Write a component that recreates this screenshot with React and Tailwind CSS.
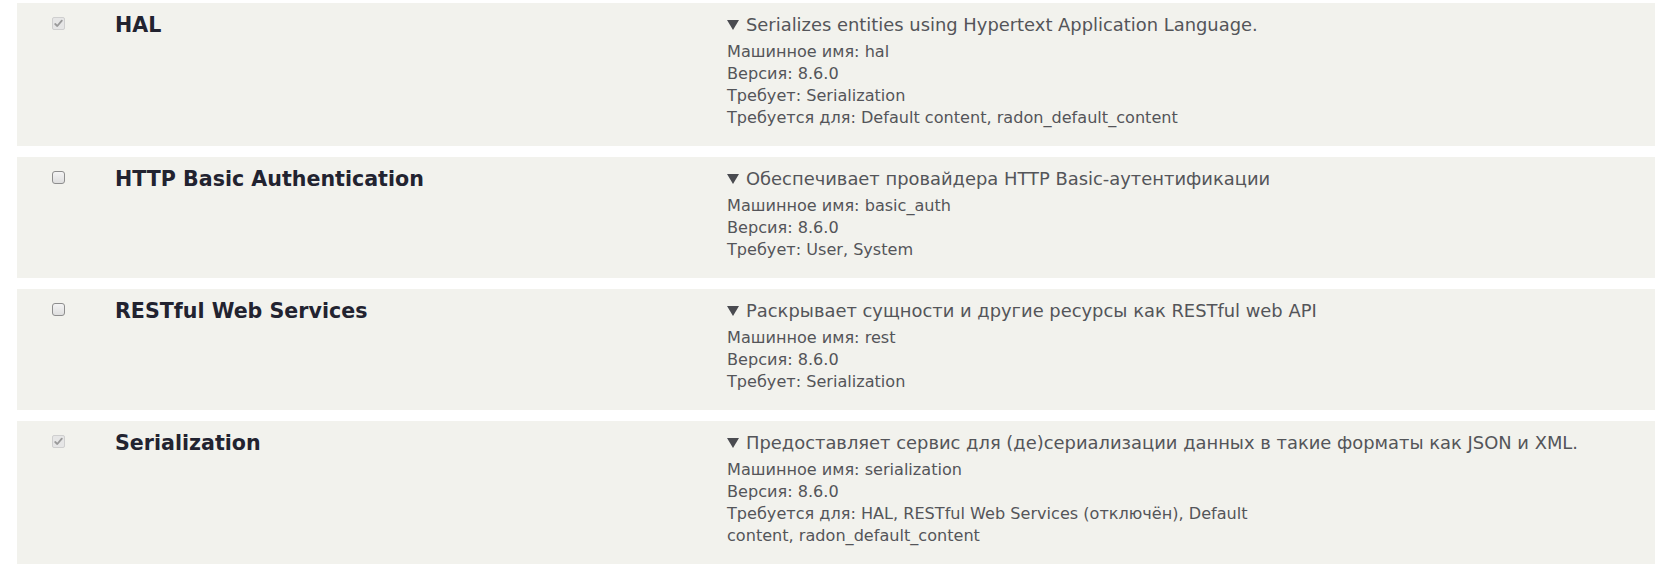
import React from "react";

const modules = [
  {
    name: "HAL",
    checked: true,
    summary: "Serializes entities using Hypertext Application Language.",
    details: [
      "Машинное имя: hal",
      "Версия: 8.6.0",
      "Требует: Serialization",
      "Требуется для: Default content, radon_default_content",
    ],
  },
  {
    name: "HTTP Basic Authentication",
    checked: false,
    summary: "Обеспечивает провайдера HTTP Basic-аутентификации",
    details: ["Машинное имя: basic_auth", "Версия: 8.6.0", "Требует: User, System"],
  },
  {
    name: "RESTful Web Services",
    checked: false,
    summary: "Раскрывает сущности и другие ресурсы как RESTful web API",
    details: ["Машинное имя: rest", "Версия: 8.6.0", "Требует: Serialization"],
  },
  {
    name: "Serialization",
    checked: true,
    summary:
      "Предоставляет сервис для (де)сериализации данных в такие форматы как JSON и XML.",
    details: [
      "Машинное имя: serialization",
      "Версия: 8.6.0",
      "Требуется для: HAL, RESTful Web Services (отключён), Default content, radon_default_content",
    ],
  },
];

const Checkbox = ({ checked }) => {
  if (checked) {
    // disabled + checked, rendered greyed out
    return (
      <div className="w-[13px] h-[13px] rounded-[2px] border border-[#cfcfcf] bg-[#e6e6e6] flex items-center justify-center">
        <svg width="9" height="9" viewBox="0 0 9 9">
          <path
            d="M1.2 5 L3.3 7 L7.8 1.6"
            fill="none"
            stroke="#9a9a9a"
            strokeWidth="1.8"
            strokeLinecap="round"
            strokeLinejoin="round"
          />
        </svg>
      </div>
    );
  }
  return (
    <div className="w-[13px] h-[13px] rounded-[3px] border border-[#8e8e8e] bg-gradient-to-b from-[#f4f4f4] to-[#dedede]" />
  );
};

const ModuleRow = ({ mod }) => (
  <div className="flex bg-[#f2f2ed] ml-[17px] pb-[17.5px]">
    <div className="w-[98px] pl-[35px] pt-[14px] shrink-0">
      <Checkbox checked={mod.checked} />
    </div>
    <div className="w-[612px] shrink-0 pt-[10px]">
      <div className="text-[20.6px] leading-[24px] font-bold text-[#222330]">
        {mod.name}
      </div>
    </div>
    <div className="pt-[10px] text-[#545559]">
      <div className="text-[17.9px] leading-[24px]">
        <svg
          width="12"
          height="10"
          viewBox="0 0 12 10"
          className="inline-block align-[1px] mr-[7px]"
        >
          <path d="M0 0 H12 L6 10 Z" fill="#4a4b50" />
        </svg>
        {mod.summary}
      </div>
      <div className="mt-[3.5px] max-w-[550px] text-[16.1px] leading-[22px]">
        {mod.details.map((line) => (
          <div key={line}>{line}</div>
        ))}
      </div>
    </div>
  </div>
);

export default function App() {
  return (
    <div
      className="min-h-screen bg-white pt-[3px] flex flex-col gap-[11px]"
      style={{ fontFamily: '"DejaVu Sans", "Noto Sans", sans-serif' }}
    >
      {modules.map((mod) => (
        <ModuleRow key={mod.name} mod={mod} />
      ))}
    </div>
  );
}
